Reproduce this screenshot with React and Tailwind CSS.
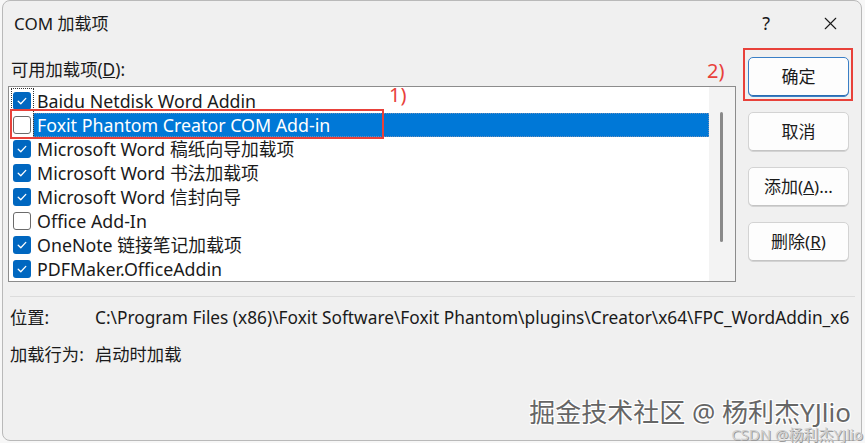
import { X } from "lucide-react";

const font = { fontFamily: '"Noto Sans", "Noto Sans CJK SC", sans-serif' };

const items = [
  { label: "Baidu Netdisk Word Addin", checked: true },
  { label: "Foxit Phantom Creator COM Add-in", checked: false, selected: true },
  { label: "Microsoft Word 稿纸向导加载项", checked: true },
  { label: "Microsoft Word 书法加载项", checked: true },
  { label: "Microsoft Word 信封向导", checked: true },
  { label: "Office Add-In", checked: false },
  { label: "OneNote 链接笔记加载项", checked: true },
  { label: "PDFMaker.OfficeAddin", checked: true },
];

function Checkbox({ checked }) {
  if (!checked) {
    return <span className="h-[18px] w-[18px] shrink-0 rounded-[3px] border border-[#6b6b6b] bg-white" />;
  }
  return (
    <span className="flex h-[18px] w-[18px] shrink-0 items-center justify-center rounded-[3px] bg-[#0067c0]">
      <svg width="12" height="12" viewBox="0 0 12 12" fill="none">
        <path d="M2.2 6.3 L4.8 8.8 L9.8 3.4" stroke="#fff" strokeWidth="1.3" strokeLinecap="round" strokeLinejoin="round" />
      </svg>
    </span>
  );
}

function Row({ label, checked, selected }) {
  return (
    <div className="flex h-[24px] items-center pl-[4px]">
      <Checkbox checked={checked} />
      <div
        className={
          selected
            ? "ml-[2px] flex h-[24px] flex-1 items-center border border-dotted border-[#6d8fb8] bg-[#0078d7] pl-[3px] text-white"
            : "ml-[2px] flex h-[24px] flex-1 items-center pl-[4px] text-[#1a1a1a]"
        }
      >
        {label}
      </div>
    </div>
  );
}

function Button({ children, primary }) {
  return (
    <button
      type="button"
      className={
        primary
          ? "h-[40px] w-[101px] rounded-[5px] border border-[#3a7fc6] bg-[#fdfdfd] text-[17px] text-[#1a1a1a] shadow-[inset_0_-1px_0_#2c6cb0]"
          : "h-[40px] w-[101px] rounded-[5px] border border-[#d3d3d3] bg-[#fdfdfd] text-[17px] text-[#1a1a1a] shadow-[inset_0_-1px_0_#c4c4c4]"
      }
    >
      {children}
    </button>
  );
}

export default function App() {
  return (
    <div className="relative h-[443px] w-[865px] overflow-hidden bg-[#f7f7f7]" style={font}>
      <div className="relative ml-[2px] flex h-[441px] w-[860px] flex-col rounded-[8px] border border-[#b9b9b9] bg-[#f0f0f0] text-[17.3px] text-[#1a1a1a]">
        {/* title bar */}
        <div className="flex h-[45px] items-center pl-[11px]">
          <span className="text-[17px]">COM 加载项</span>
          <span className="ml-auto mr-[50px] text-[18px]">?</span>
          <X size={21} strokeWidth={1.3} className="mr-[20px]" />
        </div>

        {/* main section */}
        <div className="flex pl-[5px]">
          <div className="flex w-[728px] flex-col">
            <div className="mt-[13px] h-[22px] pl-[3px] leading-[22px]">
              可用加载项(<span className="underline">D</span>):
            </div>
            <div className="relative mt-[5px] flex h-[196px] border border-[#8c8c8c] bg-white text-[17.8px]">
              <div className="flex flex-1 flex-col pt-[2px]">
                {items.map((it) => (
                  <Row key={it.label} {...it} />
                ))}
              </div>
              <div className="w-[26px] bg-[#f3f3f3] pt-[25px]">
                <div className="ml-[11px] h-[130px] w-[3px] rounded-full bg-[#8a8a8a]" />
              </div>
              <div className="absolute left-[2px] top-[1px] h-[50px] w-[23px] border border-dotted border-[#333]" />
              <div className="absolute left-[1px] top-[22px] h-[30px] w-[374px] border-2 border-[#e8413a]" />
              <span className="absolute left-[380px] top-[-7px] text-[20px] text-[#e8413a]">1)</span>
            </div>
          </div>

          <div className="ml-[12px] mt-[11px] flex flex-col gap-[15px]">
            <Button primary>确定</Button>
            <Button>取消</Button>
            <Button>
              添加(<span className="underline">A</span>)...
            </Button>
            <Button>
              删除(<span className="underline">R</span>)
            </Button>
          </div>
        </div>

        <span className="absolute left-[704px] top-[55px] text-[20px] text-[#e8413a]">2)</span>
        <div className="absolute left-[740px] top-[47px] h-[53px] w-[110px] border-2 border-[#e8413a]" />

        {/* separator */}
        <div className="ml-[7px] mr-[6px] mt-[14px] h-px bg-[#dcdcdc]" />

        {/* details */}
        <div className="mt-[10px] flex h-[22px] items-center whitespace-nowrap pl-[7px]">
          <span className="w-[85px] shrink-0">位置:</span>
          <span>C:\Program Files (x86)\Foxit Software\Foxit Phantom\plugins\Creator\x64\FPC_WordAddin_x6</span>
        </div>
        <div className="mt-[15px] flex h-[22px] items-center whitespace-nowrap pl-[7px]">
          <span className="w-[85px] shrink-0">加载行为:</span>
          <span>启动时加载</span>
        </div>

        {/* watermark */}
        <div className="absolute right-[10px] top-[399px] text-[26px] leading-[24px] text-[#666666] [text-shadow:1px_1px_0_#ffffff,-1px_-1px_0_#ffffff,1px_-1px_0_#ffffff,-1px_1px_0_#ffffff]">
          掘金技术社区 @ 杨利杰YJlio
        </div>
      </div>
      <div className="absolute right-[2px] top-[426px] text-[15px] leading-[16px] text-[#d0d0d0] [text-shadow:1px_1px_0_#9a9a9a]">
        CSDN @杨利杰YJlio
      </div>
    </div>
  );
}
